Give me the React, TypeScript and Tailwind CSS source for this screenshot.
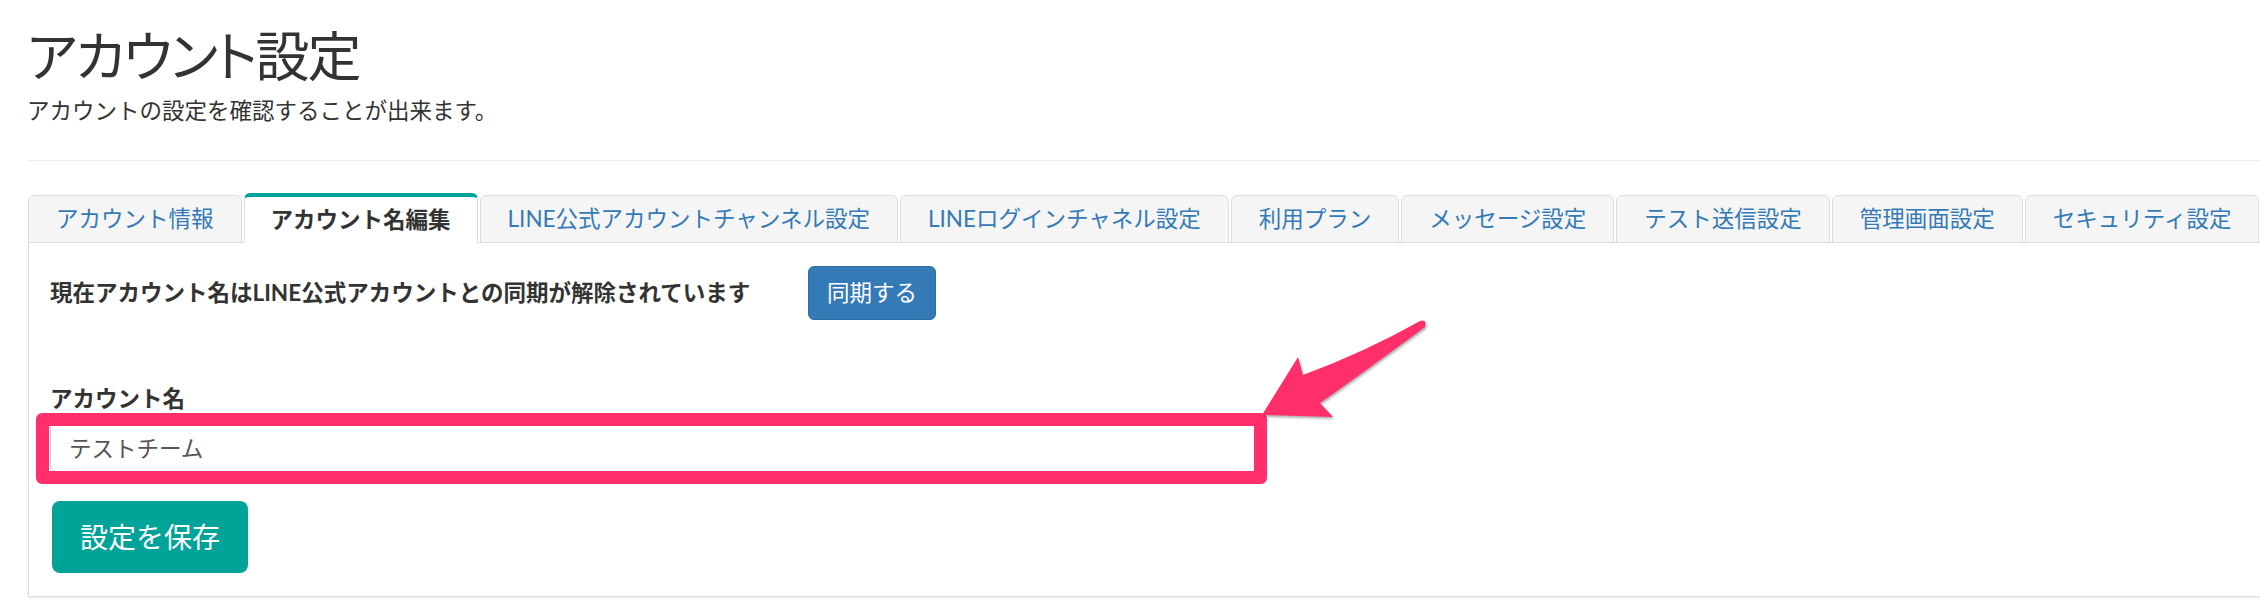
import React from 'react'

const TABS = [
  'アカウント情報',
  'アカウント名編集',
  'LINE公式アカウントチャンネル設定',
  'LINEログインチャネル設定',
  '利用プラン',
  'メッセージ設定',
  'テスト送信設定',
  '管理画面設定',
  'セキュリティ設定',
]
const ACTIVE = 1

function Tab({ label, active }: { label: string; active: boolean }) {
  if (active) {
    return (
      <div className="-mb-px flex h-[50px] items-center rounded-t-[6px] border-x border-t-[4px] border-b border-x-[#ddd] border-t-[#00a398] border-b-white bg-white px-[26px] font-bold text-[#333]">
        {label}
      </div>
    )
  }
  return (
    <div className="-mb-px flex h-[48px] items-center rounded-t-[6px] border border-[#ddd] bg-[#f5f5f5] px-[27px] text-[#337ab7]">
      {label}
    </div>
  )
}

// 矢印（注釈）
function Arrow() {
  return (
    <svg
      className="pointer-events-none absolute left-[1240px] top-[300px] drop-shadow-[1px_2px_1px_rgba(0,0,0,0.3)]"
      width="200"
      height="140"
      viewBox="1240 300 200 140"
    >
      <path
        d="M1262 415 L1298 357 L1303 375 Q1365 352 1420 321 Q1427 319 1425 327 Q1360 375 1320 403 L1333 417 Z"
        fill="#ff2f6c"
      />
    </svg>
  )
}

export default function App() {
  return (
    <div className="relative h-[614px] w-[2260px] overflow-hidden bg-white font-['Lato','Noto_Sans_CJK_JP',sans-serif] text-[22.5px] leading-[32px] text-[#333]">
      <div className="pl-[27px]">
        <h1 className="pt-[27px] text-[54px] leading-[60px] font-normal tracking-[-2px] [font-feature-settings:'palt']">アカウント設定</h1>
        <p className="mt-[8px]">アカウントの設定を確認することが出来ます。</p>
        <div className="mt-[33px] border-t border-[#eee]" />
      </div>

      <div className="ml-[28px] mt-[32px] w-[2300px]">
        <div className="flex items-end gap-[2px] border-b border-[#ddd]">
          {TABS.map((t, i) => (
            <Tab key={t} label={t} active={i === ACTIVE} />
          ))}
        </div>

        <div className="border-x border-b border-[#ddd] px-[21px] pt-[23px] pb-[23px] shadow-[0_1px_2px_rgba(0,0,0,0.08)]">
          <div className="flex items-center">
            <p className="w-[758px] font-bold">現在アカウント名はLINE公式アカウントとの同期が解除されています</p>
            <button className="h-[54px] rounded-[6px] border border-[#2e6da4] bg-[#337ab7] px-[18px] text-white">
              同期する
            </button>
          </div>

          <label className="mt-[63px] block font-bold">アカウント名</label>
          <input
            className="mt-[6px] block h-[51px] w-[1210px] rounded-[6px] border border-[#ccc] px-[18px] text-[#555] outline-none"
            defaultValue="テストチーム"
          />

          <button className="mt-[29px] ml-[2px] h-[72px] rounded-[8px] bg-[#00a398] px-[28px] text-[28px] text-white">
            設定を保存
          </button>
        </div>
      </div>

      {/* 強調枠 */}
      <div className="pointer-events-none absolute left-[36px] top-[413px] h-[71px] w-[1231px] rounded-[6px] border-[13px] border-[#ff2f6c]" />
      <Arrow />
    </div>
  )
}
